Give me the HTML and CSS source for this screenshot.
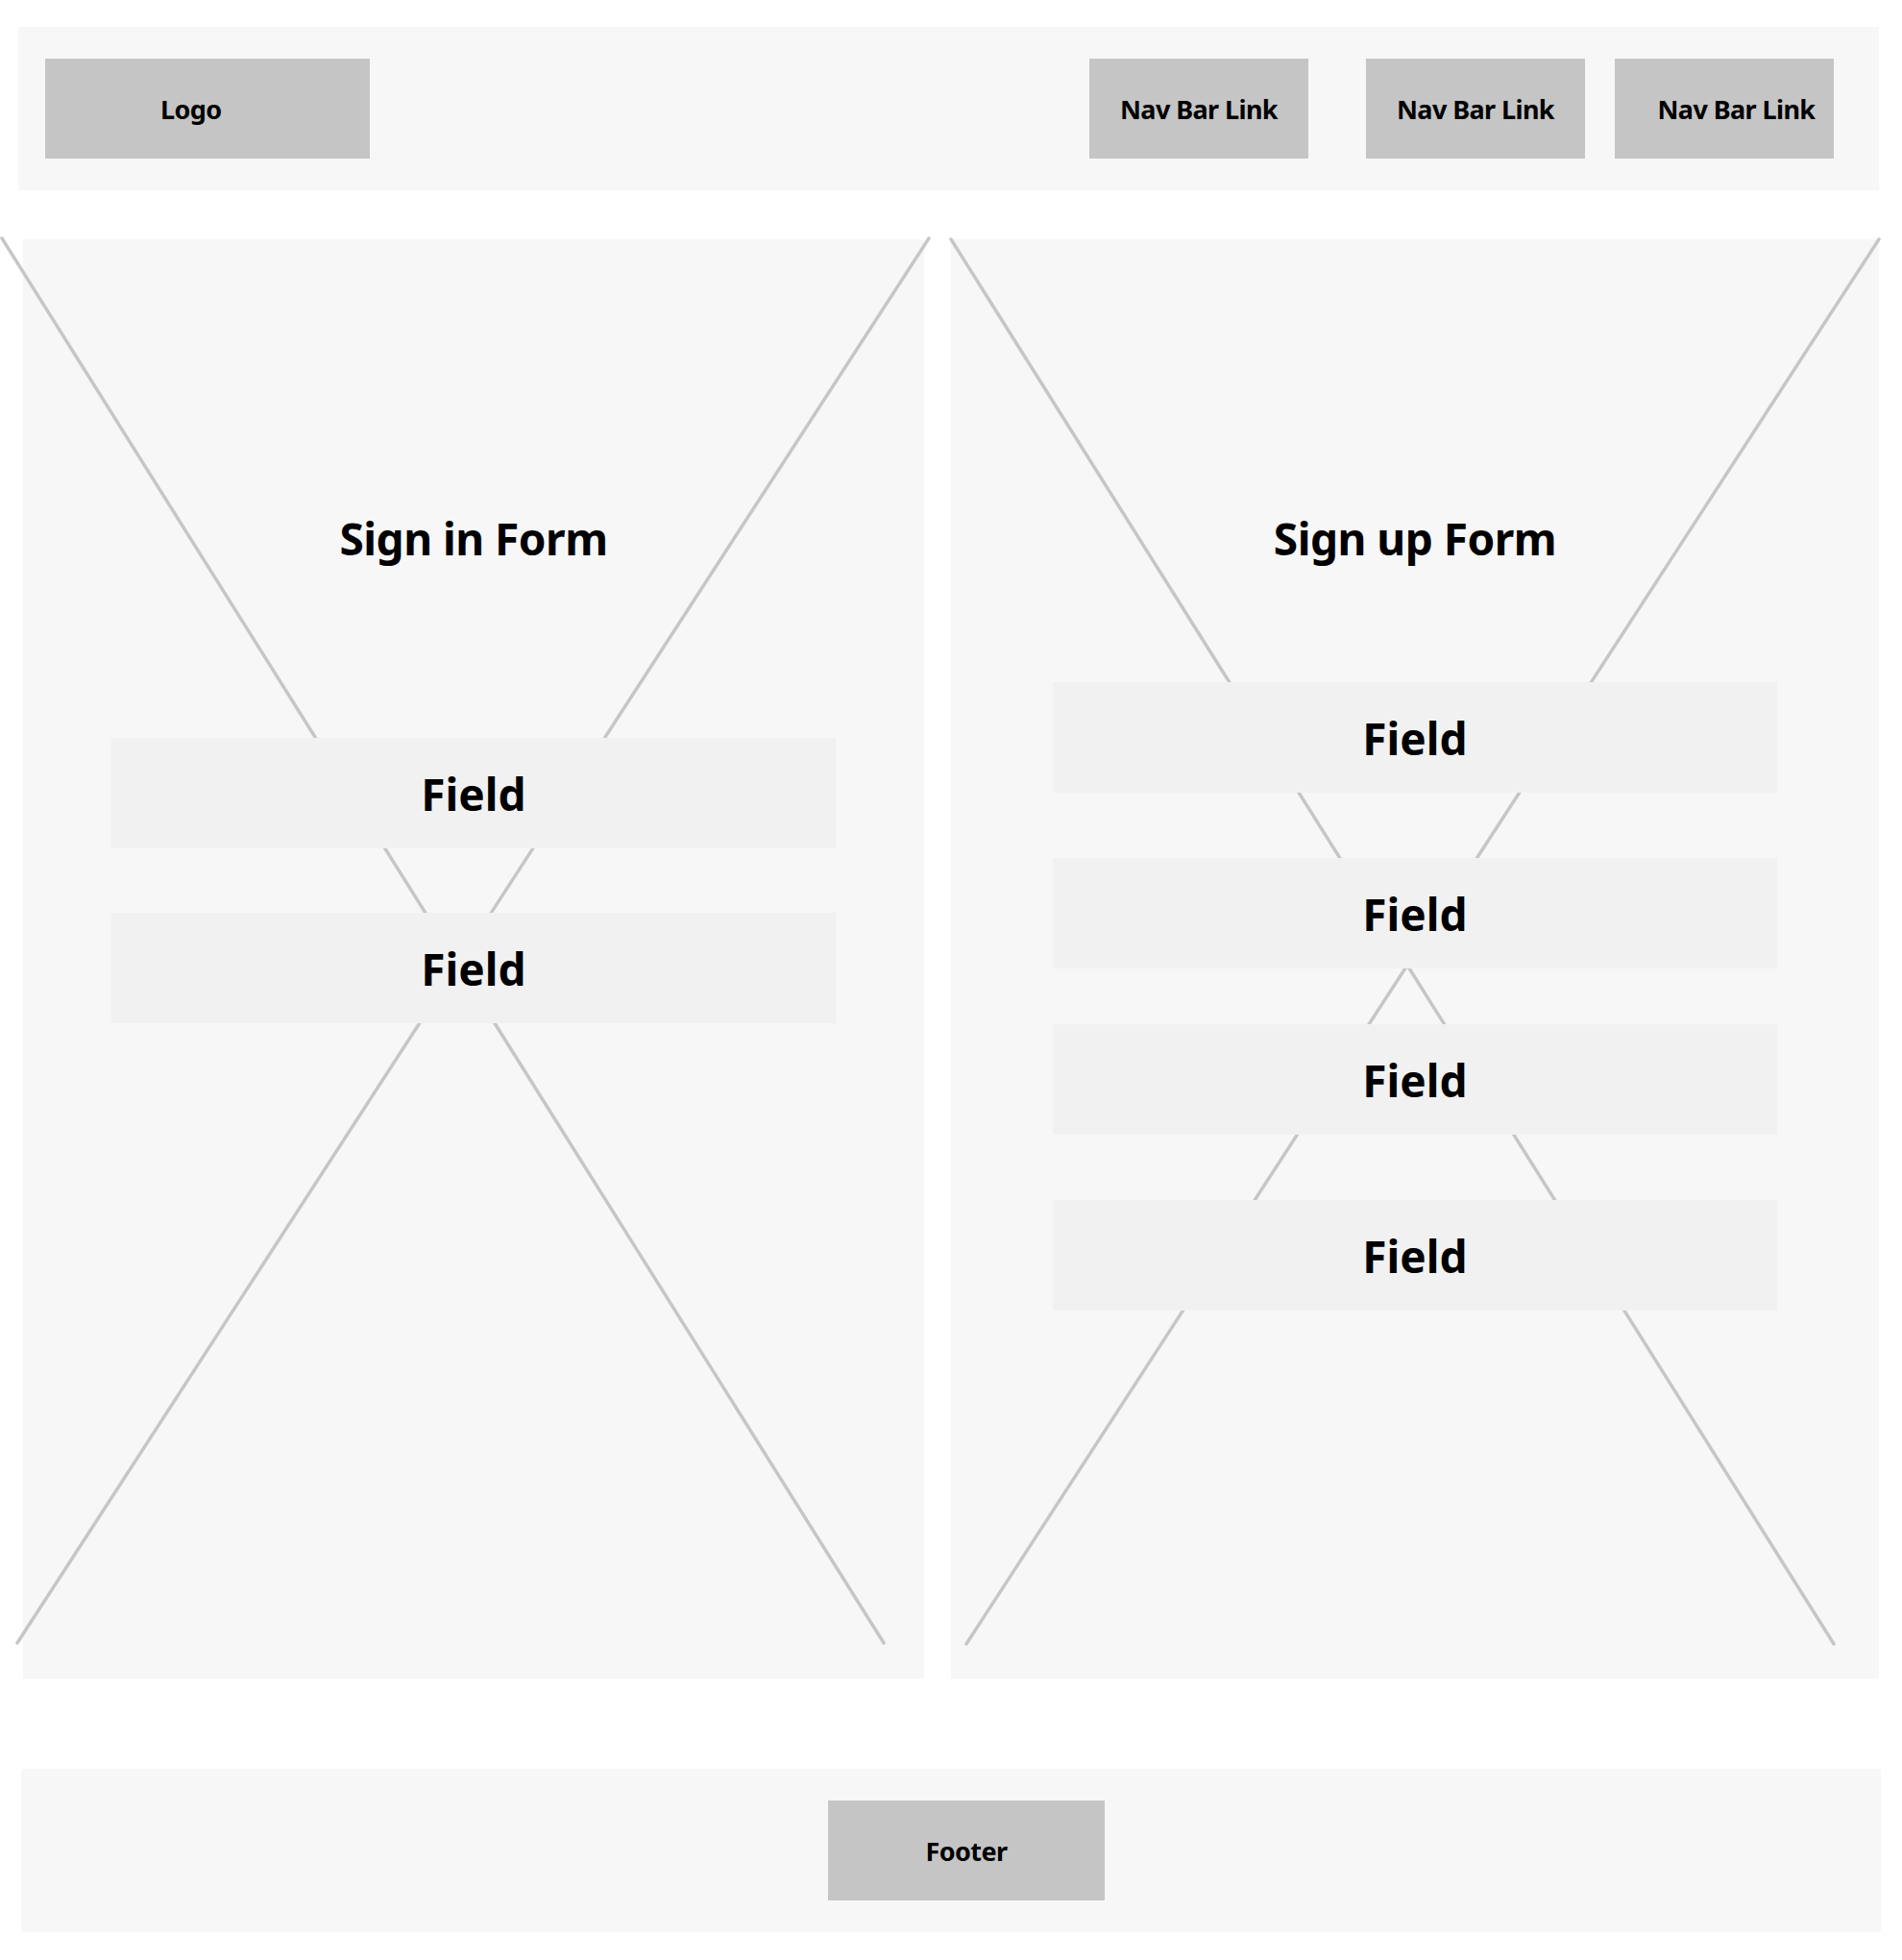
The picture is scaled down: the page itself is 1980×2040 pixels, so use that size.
FILE: index.html
```html
<!DOCTYPE html>
<html lang="en">
<head>
    <meta charset="UTF-8">
    <meta name="viewport" content="width=device-width, initial-scale=1.0">
    <title>Wireframe</title>
    <link rel="stylesheet" href="styles.css">
</head>
<body>
    <header class="topbar">
        <div class="logo">Logo</div>
        <nav class="nav">
            <a class="nav-link">Nav Bar Link</a>
            <a class="nav-link">Nav Bar Link</a>
            <a class="nav-link">Nav Bar Link</a>
        </nav>
    </header>

    <main class="forms">
        <section class="panel panel-signin">
            <!-- placeholder cross -->
            <svg class="cross">
                <line x1="-22" y1="-1" x2="896" y2="1461"/>
                <line x1="943" y1="-1" x2="-6" y2="1461"/>
            </svg>
            <h2 class="panel-title">Sign in Form</h2>
            <div class="fields">
                <div class="field">Field</div>
                <div class="field">Field</div>
            </div>
        </section>

        <section class="panel panel-signup">
            <svg class="cross">
                <line x1="0" y1="0" x2="919" y2="1462"/>
                <line x1="966" y1="0" x2="16" y2="1462"/>
            </svg>
            <h2 class="panel-title">Sign up Form</h2>
            <div class="fields">
                <div class="field">Field</div>
                <div class="field">Field</div>
                <div class="field">Field</div>
                <div class="field">Field</div>
            </div>
        </section>
    </main>

    <footer class="bottombar">
        <div class="footer-box">Footer</div>
    </footer>
</body>
</html>
```

FILE: styles.css
```css
body { margin: 0; background: #fff; color: #000; font-family: "Noto Sans", "Open Sans", sans-serif; font-weight: 700; }

/* header */
.topbar { display: flex; justify-content: space-between; align-items: center; height: 170px; margin: 28px 24px 0 19px; padding: 0 47px 0 28px; background: #f7f7f7; }
.logo { display: flex; align-items: center; box-sizing: border-box; width: 338px; height: 104px; padding-left: 120px; background: #c5c5c5; font-size: 27px; letter-spacing: -0.6px; }
.nav { display: flex; gap: 31px; }
.nav-link { display: flex; align-items: center; justify-content: center; box-sizing: border-box; width: 228px; height: 104px; background: #c5c5c5; font-size: 27px; letter-spacing: -0.6px; }
.nav-link:first-child { margin-right: 29px; }
.nav-link:last-child { padding-left: 25px; }

/* forms */
.forms { display: flex; gap: 28px; margin: 51px 0 0 24px; }
.panel { position: relative; display: flex; flex-direction: column; align-items: center; box-sizing: border-box; height: 1498px; padding-top: 280px; background: #f7f7f7; }
.panel-signin { width: 938px; }
.panel-signup { width: 966px; }
.cross { position: absolute; top: 0; left: 0; width: 100%; height: 100%; overflow: visible; }
.cross line { stroke: #c6c6c6; stroke-width: 3.5; stroke-linecap: round; }
.panel-title { position: relative; margin: 0; font-size: 46px; line-height: 62px; font-weight: 700; letter-spacing: -0.5px; }
.fields { position: relative; display: flex; flex-direction: column; }
.panel-signin .fields { margin-top: 177px; gap: 67px; }
.panel-signup .fields { margin-top: 119px; gap: 68px; }
.panel-signup .field:nth-child(3) { margin-top: -10px; }
.field { display: flex; align-items: center; justify-content: center; width: 754px; height: 115px; background: #f1f1f1; font-size: 46px; }

/* footer */
.bottombar { display: flex; align-items: center; justify-content: center; height: 170px; margin: 94px 22px 0 22px; padding-left: 32px; background: #f7f7f7; }
.footer-box { display: flex; align-items: center; justify-content: center; width: 288px; height: 104px; background: #c5c5c5; font-size: 27px; letter-spacing: -0.6px; }
```
